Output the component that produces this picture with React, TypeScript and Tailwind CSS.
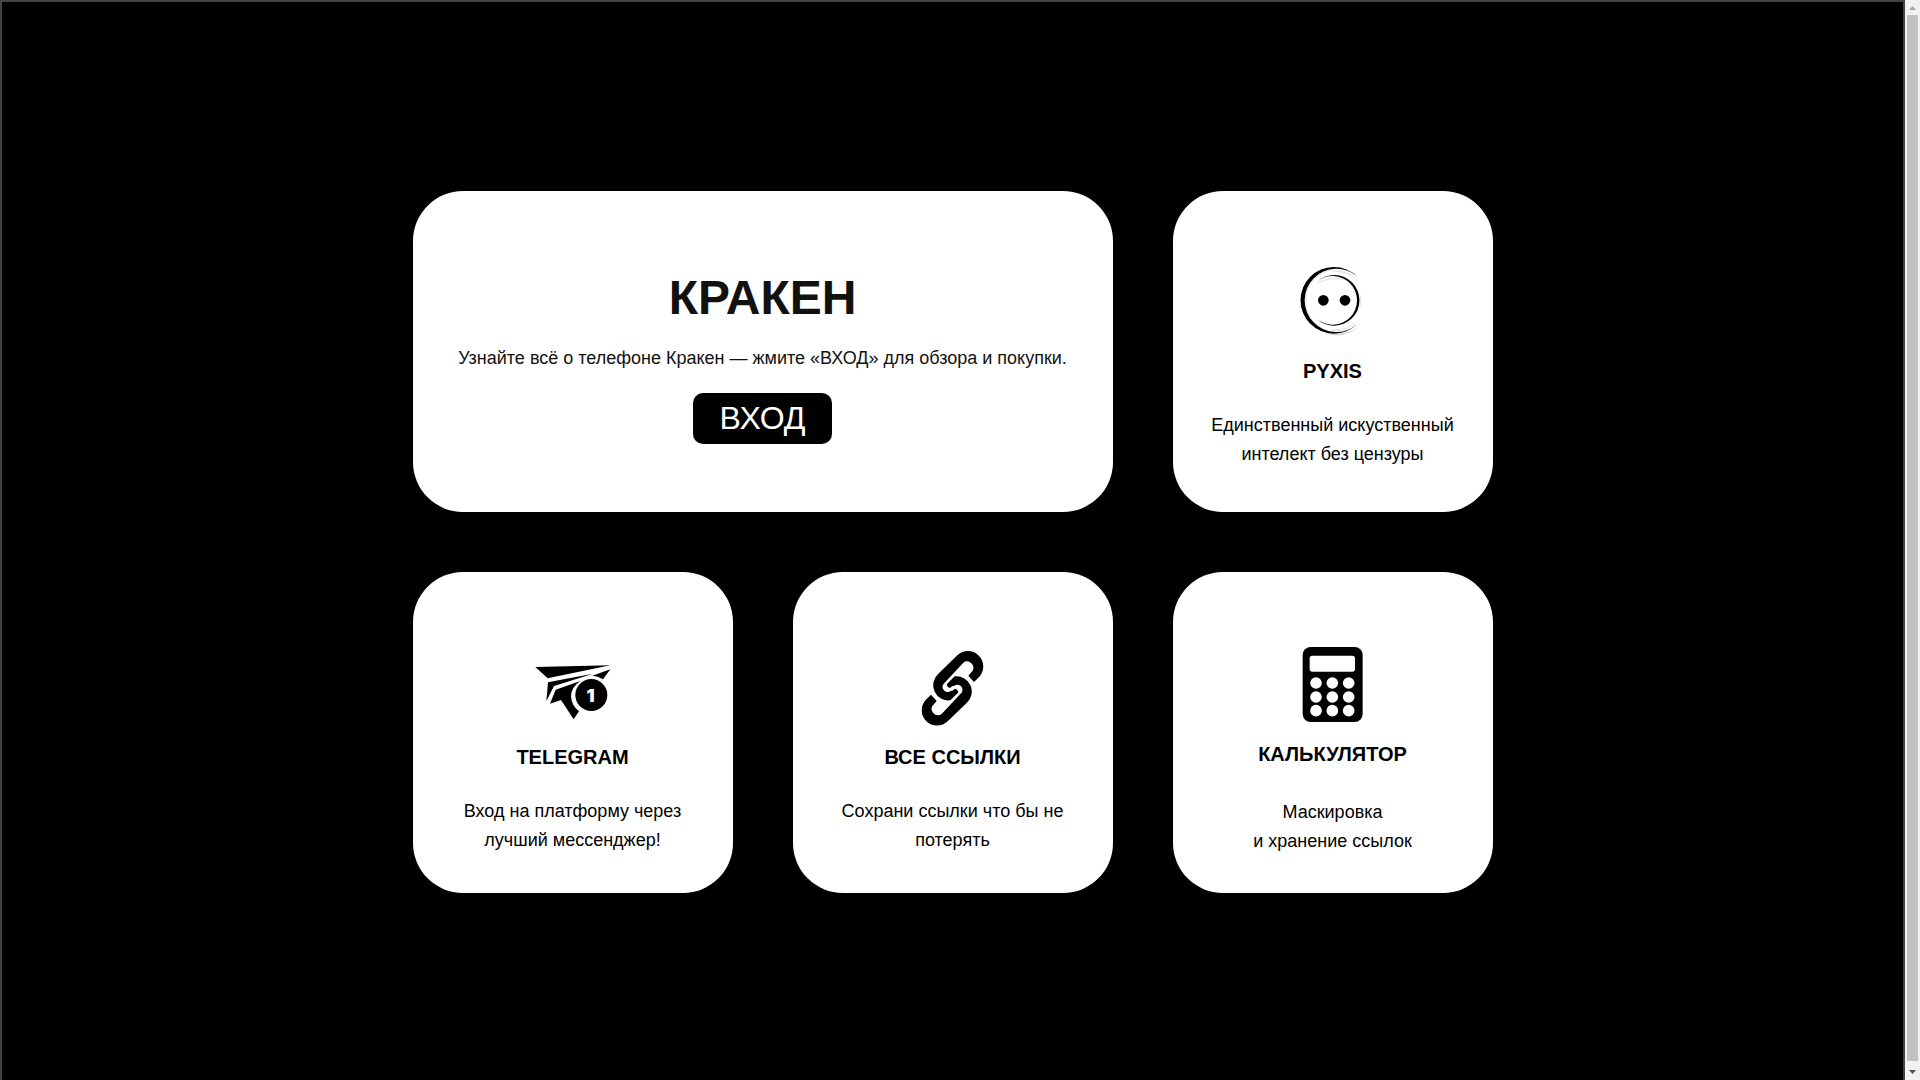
import React from 'react';

const PyxisIcon: React.FC = () => (
  <svg className="w-20 h-20" viewBox="39 39 240 240" aria-hidden="true">
    {/* soft shade between the rings and under the outer one */}
    <path d="M160 58 A93 93 0 0 0 120 234 A96 96 0 0 1 160 58 Z" fill="#e4e4e4" stroke="#ececec" strokeWidth="6" />
    <path d="M130 250 Q190 270 238 230 Q196 258 130 250 Z" fill="#d8d8d8" />
    <path d="M158 238 Q206 240 240 206 Q206 246 158 244 Z" fill="#e4e4e4" />
    <path d="M158 62 Q206 56 236 92 Q200 64 158 66 Z" fill="#e8e8e8" />
    <path d="M112 100 Q150 76 190 88 Q150 82 112 100 Z" fill="#d8d8d8" stroke="#ececec" strokeWidth="3" />
    <path d="M241 130 Q246 151 240 174 Z" fill="#e0e0e0" />
    <path d="M232 80 A100 100 0 1 0 232 222 A95 95 0 1 1 232 80 Z" fill="#000" />
    <path d="M110 96 A76 76 0 1 1 110 206 A73 73 0 1 0 110 96 Z" fill="#000" />
    <circle cx="130" cy="151" r="16" />
    <circle cx="195" cy="151" r="16" />
  </svg>
);

const TelegramIcon: React.FC = () => (
  <svg className="w-20 h-20" viewBox="38 27 240 240" aria-hidden="true">
    <path d="M45 81 L270 76 L82 115 Z" />
    <path d="M83 127 L218 101 L101 138 L78 184 Z" />
    <path d="M270 88 L248 118 Q233 108 216 107 Z" />
    <path d="M106 149 L180 123 Q152 142 152 169 Q154 198 176 214 L160 238 L122 180 L89 191 Z" />
    <circle cx="213" cy="165" r="48" />
    <text x="211" y="186" textAnchor="middle" fill="#fff" fontFamily="Inter, sans-serif" fontWeight="900" fontSize="54">1</text>
  </svg>
);

const linkHalf =
  'M222 156 L238 140 A46 46 0 0 0 172 76 L115 131 A46 46 0 0 0 151 211 L174 188 A9 9 0 0 0 164 177 Q160 183 152 183 A15 15 0 0 1 134 158 L190 98 A19 19 0 0 1 218 122 L205 137 Z';

const LinkIcon: React.FC = () => (
  <svg className="w-20 h-20" viewBox="39 57 240 240" aria-hidden="true">
    <path d={linkHalf} />
    <path d={linkHalf} transform="rotate(180 157.5 175)" />
  </svg>
);

const CalculatorIcon: React.FC = () => (
  <svg className="w-20 h-20" viewBox="39 48 240 240" aria-hidden="true">
    <rect x="68" y="51" width="180" height="225" rx="24" />
    <rect x="89" y="77" width="136" height="48" rx="8" fill="#fff" />
    {[159, 201, 242].map((cy) =>
      [108, 157, 206].map((cx) => <circle key={`${cx}-${cy}`} cx={cx} cy={cy} r="17.5" fill="#fff" />)
    )}
  </svg>
);

interface CardProps {
  icon: React.ReactNode;
  title: string;
  lines: string[];
  padding: string;
  textGap?: string;
}

const Card: React.FC<CardProps> = ({ icon, title, lines, padding, textGap = 'mt-6' }) => (
  <article className={`min-h-[321px] bg-white rounded-[50px] flex flex-col items-center px-5 pb-8 text-center text-black ${padding}`}>
    {icon}
    <h2 className="mt-3 text-[20px] leading-8 font-bold">{title}</h2>
    <p className={`text-[18px] leading-[29px] whitespace-pre-line ${textGap}`}>{lines.join('\n')}</p>
  </article>
);

const Scrollbar: React.FC = () => (
  <div className="w-[15px] shrink-0 bg-[#f1f1f1] flex flex-col items-center" aria-hidden="true">
    <svg className="w-[15px] h-[15px]" viewBox="0 0 15 15">
      <path d="M4 10 L7.5 6 L11 10 Z" fill="#a3a3a3" />
    </svg>
    <div className="w-[11px] grow bg-[#c1c1c1]" />
    <svg className="w-[15px] h-[19px]" viewBox="0 0 15 19">
      <path d="M4 9 L11 9 L7.5 13 Z" fill="#505050" />
    </svg>
  </div>
);

const App: React.FC = () => {
  return (
    <div className="min-h-screen flex bg-black font-['Liberation_Sans',Arial,sans-serif]">
      <main className="grow flex items-center justify-center border-t-2 border-x-2 border-[#444] px-5 pt-0.5">
        <div className="w-full max-w-[1080px] grid grid-cols-1 lg:grid-cols-3 gap-[60px]">
          <section className="lg:col-span-2 min-h-[321px] bg-white rounded-[50px] flex flex-col items-center justify-center px-5 text-center text-[#111]">
            <h1 className="text-[48px] leading-[76px] font-bold">КРАКЕН</h1>
            <p className="mt-2 text-[18px] leading-[29px]">
              Узнайте всё о телефоне Кракен — жмите «ВХОД» для обзора и покупки.
            </p>
            <a href="#" className="mt-5 w-[139px] h-[51px] rounded-[10px] bg-black text-white text-[32px] leading-[51px]">
              ВХОД
            </a>
          </section>

          <Card
            icon={<PyxisIcon />}
            title="PYXIS"
            lines={['Единственный искуственный', 'интелект без цензуры']}
            padding="pt-[72px]"
          />
          <Card
            icon={<TelegramIcon />}
            title="TELEGRAM"
            lines={['Вход на платформу через', 'лучший мессенджер!']}
            padding="pt-[77px]"
          />
          <Card
            icon={<LinkIcon />}
            title="ВСЕ ССЫЛКИ"
            lines={['Сохрани ссылки что бы не', 'потерять']}
            padding="pt-[77px]"
          />
          <Card
            icon={<CalculatorIcon />}
            title="КАЛЬКУЛЯТОР"
            lines={['Маскировка', 'и хранение ссылок']}
            padding="pt-[74px]"
            textGap="mt-7"
          />
        </div>
      </main>
      <Scrollbar />
    </div>
  );
};

export default App;
